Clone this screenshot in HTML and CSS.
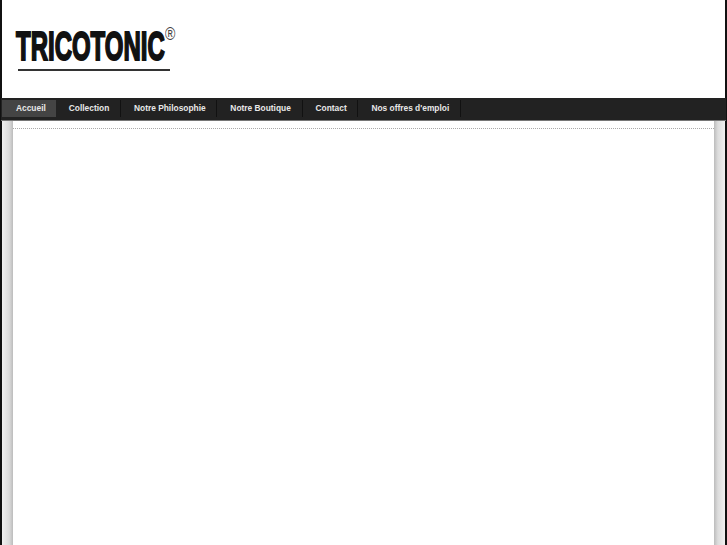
FILE: index.html
```html
<!DOCTYPE html>
<html lang="fr">
<head>
<meta charset="utf-8">
<title>Tricotonic</title>
<link rel="stylesheet" href="styles.css">
</head>
<body>
<div class="page">
  <header class="header">
    <a class="logo" href="#">
      <span class="logo-name"><span class="logo-text">TRICOTONIC</span></span><span class="logo-reg">®</span>
    </a>
  </header>
  <nav class="nav">
    <a class="nav-item active" href="#">Accueil</a>
    <a class="nav-item" href="#">Collection</a>
    <a class="nav-item" href="#">Notre Philosophie</a>
    <a class="nav-item" href="#">Notre Boutique</a>
    <a class="nav-item" href="#">Contact</a>
    <a class="nav-item" href="#">Nos offres d'emploi</a>
  </nav>
  <div class="body-wrap">
    <div class="side side-left"></div>
    <main class="content"><div class="dots"></div></main>
    <div class="side side-right"></div>
  </div>
</div>
</body>
</html>
```
FILE: styles.css
```css
html, body {
  margin: 0;
  height: 100%;
  background: #fff;
  overflow: hidden;
}
.page {
  height: 545px;
  display: flex;
  flex-direction: column;
  box-sizing: border-box;
  border-left: 2px solid #111;
  border-right: 2px solid #111;
  font-family: "Liberation Sans", Arial, sans-serif;
}
.header {
  height: 98px;
  flex: none;
  box-sizing: border-box;
  padding: 25px 0 0 14px;
}
.logo {
  display: flex;
  align-items: flex-start;
  color: #111;
  text-decoration: none;
  width: 162px;
}
.logo-name {
  display: block;
  width: 152px;
  height: 46px;
  margin-left: 2px;
  box-sizing: border-box;
  border-bottom: 2px solid #333;
}
.logo-text {
  display: block;
  margin-left: -2px;
  width: 230px;
  font-weight: 700;
  font-size: 41px;
  line-height: 42px;
  letter-spacing: 0;
  -webkit-text-stroke: 2px #111;
  white-space: nowrap;
  transform: scaleX(0.585);
  transform-origin: 0 50%;
}
.logo-reg {
  font-size: 18px;
  line-height: 18px;
  font-weight: 400;
  color: #444;
  margin: 0 0 0 -5px;
  transform: scaleX(0.78);
  transform-origin: 0 0;
}
.nav {
  height: 23px;
  flex: none;
  display: flex;
  align-items: stretch;
  box-sizing: border-box;
  background: #222;
  padding: 2px 0 3px 1px;
  border-bottom: 1px solid #777;
  margin: 0 -1px;
}
.nav-item {
  display: flex;
  align-items: center;
  padding: 0 10.7px 2px 13px;
  font-size: 8.4px;
  font-weight: 700;
  color: #e8e8e8;
  text-decoration: none;
  white-space: nowrap;
  border-right: 1px solid #111;
}
.nav-item.active {
  background: #444;
  border-right: 0;
  padding: 0 10px 2px 14px;
}
.body-wrap {
  flex: 1;
  display: flex;
  min-height: 0;
}
.side {
  width: 11px;
  flex: none;
}
.side-left {
  background: linear-gradient(to right, #f0f0f0 0%, #dcdcdc 65%, #bcbcbc 100%);
}
.side-right {
  background: linear-gradient(to right, #bcbcbc 0%, #dcdcdc 35%, #f0f0f0 100%);
}
.content {
  flex: 1;
  background: #fff;
}
.dots {
  height: 7px;
  border-bottom: 1px dotted #aaa;
}
```
